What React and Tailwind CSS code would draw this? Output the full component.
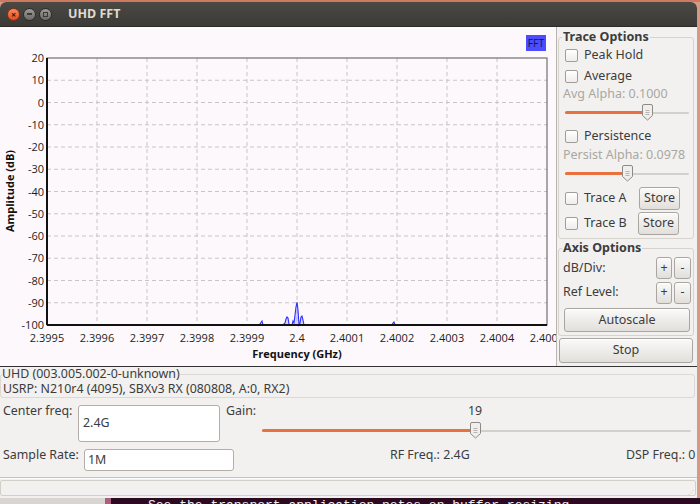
import React from "react";

const yTicks = [20, 10, 0, -10, -20, -30, -40, -50, -60, -70, -80, -90, -100];
const xTicks = ["2.3995", "2.3996", "2.3997", "2.3998", "2.3999", "2.4", "2.4001", "2.4002", "2.4003", "2.4004", "2.4005"];

// plot frame in svg coords (svg starts at page y 27)
const L = 47, R = 547, T = 31, B = 298;
const yOf = (v) => T + ((20 - v) * (B - T)) / 120;
const xOf = (i) => L + i * 50;

const trace =
  "M47 298 L258 298 L260 297 L262 294 L263 298 L283 298 L285 296 L286 292 L287 290 L288 291 L289 297 L290 298 L292 298 L293 294 L294 296 L295 288 L296 280 L297 275 L298 283 L299 298 L300 296 L301 290 L302 289 L303 293 L304 298 L392 298 L393 296 L394 295 L395 298 L547 298";

function Plot() {
  return (
    <svg width="556" height="339" className="block font-['Open_Sans',sans-serif]">
      {xTicks.slice(1, -1).map((_, i) => (
        <line key={"v" + i} x1={xOf(i + 1)} x2={xOf(i + 1)} y1={T} y2={B} stroke="#c6c6c6" strokeDasharray="4 3" />
      ))}
      {yTicks.slice(1, -1).map((v) => (
        <line key={"h" + v} x1={L} x2={R} y1={yOf(v)} y2={yOf(v)} stroke="#c6c6c6" strokeDasharray="4 3" />
      ))}
      <path d={trace + " Z"} fill="#8c8cff" fillOpacity="0.35" stroke="none" />
      <path d={trace} fill="none" stroke="#2e2eff" strokeWidth="1.1" />
      <rect x={L} y={T} width={R - L} height={B - T} fill="none" stroke="#555" strokeWidth="1" />
      <line x1={L} x2={L} y1={T} y2={B} stroke="#111" strokeWidth="2" />
      <line x1={L} x2={R} y1={B} y2={B} stroke="#111" strokeWidth="2" />
      {yTicks.map((v) => (
        <text key={"yl" + v} x="44" y={yOf(v) + 4} textAnchor="end" fontSize="11" fill="#1e1e1e">
          {v}
        </text>
      ))}
      {xTicks.map((t, i) => (
        <text key={"xl" + t} x={xOf(i)} y="315" textAnchor="middle" fontSize="11" fill="#1e1e1e">
          {t}
        </text>
      ))}
      <text x="297" y="331" textAnchor="middle" fontSize="11" fontWeight="bold" fill="#111">
        Frequency (GHz)
      </text>
      <text x="14" y="164" textAnchor="middle" fontSize="11" fontWeight="bold" fill="#111" transform="rotate(-90 14 164)">
        Amplitude (dB)
      </text>
      <rect x="526" y="8" width="20" height="16" fill="#4c4cff" />
      <text x="536" y="20" textAnchor="middle" fontSize="10.5" fill="#16163a">
        FFT
      </text>
    </svg>
  );
}

function Checkbox() {
  return <span className="w-[13px] h-[13px] shrink-0 rounded-[2px] border border-[#a19e99] bg-gradient-to-b from-white to-[#efedeb]" />;
}

function Handle() {
  return (
    <svg width="11" height="17" viewBox="0 0 11 17">
      <path d="M2 0.5 H9 a1.5 1.5 0 0 1 1.5 1.5 V11.5 L5.5 16 L0.5 11.5 V2 a1.5 1.5 0 0 1 1.5 -1.5 Z" fill="#f1efed" stroke="#8e8b86" />
      <path d="M3.5 6.5 H7.5 M3.5 8.5 H7.5 M3.5 10.5 H7.5" stroke="#b8b5b0" />
    </svg>
  );
}

function Slider({ width, at }) {
  return (
    <div className="relative h-[18px]" style={{ width }}>
      <div className="absolute left-0 right-0 top-[8px] h-[2px] rounded-full bg-[#d3d0cb]" />
      <div className="absolute left-0 top-[7px] h-[3px] rounded-full bg-[#e9703f]" style={{ width: at }} />
      <div className="absolute top-0" style={{ left: at - 5 }}>
        <Handle />
      </div>
    </div>
  );
}

function Button({ children, className = "" }) {
  return (
    <div
      className={
        "flex items-center justify-center rounded-[3px] border border-[#a9a6a1] bg-gradient-to-b from-[#fbfaf9] to-[#e2dfdb] text-[#3c3c3c] shadow-[inset_0_1px_0_#fff] " +
        className
      }
    >
      {children}
    </div>
  );
}

function Group({ title, className = "", children }) {
  return (
    <fieldset className={"rounded-[3px] border border-[#d6d2cc] " + className}>
      <legend className="ml-[3px] px-[1px] text-[12.5px] leading-[16px] font-bold text-[#3c3c3c]">{title}</legend>
      {children}
    </fieldset>
  );
}

function CheckRow({ label, className }) {
  return (
    <div className={"flex items-center gap-[6px] pl-[6px] " + className}>
      <Checkbox />
      <span>{label}</span>
    </div>
  );
}

function TracePanel() {
  return (
    <div className="flex-1 flex flex-col text-[12.5px] text-[#3c3c3c]">
      <Group title="Trace Options" className="ml-[1px] mr-[3px] mt-[2px] pb-[2px]">
        <CheckRow label="Peak Hold" className="h-[20px]" />
        <CheckRow label="Average" className="h-[22px]" />
        <div className="h-[15px] flex items-center pl-[4px] text-[#aaa7a1]">Avg Alpha: 0.1000</div>
        <div className="h-[22px] flex items-center pl-[6px]">
          <Slider width={124} at={82} />
        </div>
        <CheckRow label="Persistence" className="h-[25px]" />
        <div className="h-[13px] flex items-center pl-[4px] text-[#aaa7a1]">Persist Alpha: 0.0978</div>
        <div className="h-[23px] flex items-center pl-[6px]">
          <Slider width={124} at={62} />
        </div>
        <div className="h-[26px] flex items-center">
          <CheckRow label="Trace A" className="w-[80px]" />
          <Button className="w-[41px] h-[23px]">Store</Button>
        </div>
        <div className="h-[25px] flex items-center">
          <CheckRow label="Trace B" className="w-[79px]" />
          <Button className="w-[41px] h-[23px]">Store</Button>
        </div>
      </Group>
      <Group title="Axis Options" className="ml-[1px] mr-[3px] mt-[1px] pb-[3px]">
        <div className="h-[24px] flex items-center pl-[4px]">
          <span className="w-[93px]">dB/Div:</span>
          <Button className="w-[16px] h-[22px]">+</Button>
          <Button className="w-[17px] h-[22px] ml-[2px]">-</Button>
        </div>
        <div className="h-[25px] flex items-center pl-[4px]">
          <span className="w-[93px]">Ref Level:</span>
          <Button className="w-[16px] h-[22px]">+</Button>
          <Button className="w-[17px] h-[22px] ml-[2px]">-</Button>
        </div>
        <Button className="mt-[3px] ml-[5px] w-[126px] h-[24px]">Autoscale</Button>
      </Group>
      <Button className="ml-[2px] mr-[4px] mt-[2px] h-[25px]">Stop</Button>
    </div>
  );
}

function TitleBar() {
  return (
    <div className="h-[25px] shrink-0 flex items-center bg-gradient-to-b from-[#4a4944] to-[#3b3a36] border-b border-[#2c2b28]">
      <div className="flex items-center gap-[3px] ml-[7px]">
        <span className="w-[13px] h-[13px] rounded-full bg-gradient-to-b from-[#f88a5e] to-[#e04c1f] border border-[#8f2e10] flex items-center justify-center text-[#3a1608] text-[9px] leading-none font-bold">
          ×
        </span>
        <span className="w-[13px] h-[13px] rounded-full bg-gradient-to-b from-[#9c9a95] to-[#6c6a66] border border-[#2e2d2a] flex items-center justify-center">
          <span className="w-[5px] h-[1.5px] bg-[#3b3a36]" />
        </span>
        <span className="w-[13px] h-[13px] rounded-full bg-gradient-to-b from-[#9c9a95] to-[#6c6a66] border border-[#2e2d2a] flex items-center justify-center">
          <span className="w-[5px] h-[5px] border border-[#3b3a36]" />
        </span>
      </div>
      <span className="ml-[16px] text-[12.5px] font-bold text-[#dfdbd2]">UHD FFT</span>
    </div>
  );
}

function BottomControls() {
  return (
    <div className="flex flex-col text-[12.4px] text-[#3c3c3c]">
      <fieldset className="mr-[2px] border border-[#dcd8d2] rounded-[3px] pb-[1px]">
        <legend className="ml-[1px] leading-[14px]">UHD (003.005.002-0-unknown)</legend>
        <div className="h-[15px] leading-[15px] pl-[2px]">USRP: N210r4 (4095), SBXv3 RX (080808, A:0, RX2)</div>
      </fieldset>
      <div className="mt-[6px] h-[40px] flex items-start">
        <span className="ml-[3px] w-[75px] leading-[14px]">Center freq:</span>
        <div className="mt-[1px] w-[142px] h-[37px] rounded-[3px] border border-[#b3aea7] bg-white flex items-center pl-[4px]">2.4G</div>
        <span className="ml-[6px] w-[36px] leading-[14px]">Gain:</span>
        <div className="w-[429px] flex flex-col items-center">
          <span className="leading-[14px] mr-[3px]">19</span>
          <div className="mt-[4px]">
            <Slider width={429} at={213} />
          </div>
        </div>
      </div>
      <div className="mt-[3px] h-[26px] flex items-start">
        <span className="ml-[3px] mt-[1px] w-[81px] leading-[14px]">Sample Rate:</span>
        <div className="mt-[2px] w-[150px] h-[22px] rounded-[3px] border border-[#b3aea7] bg-white flex items-center pl-[3px]">1M</div>
        <span className="ml-[156px] mt-[1px] w-[236px] leading-[14px] whitespace-nowrap">RF Freq.: 2.4G</span>
        <span className="mt-[1px] leading-[14px] whitespace-nowrap">DSP Freq.: 0</span>
      </div>
      <div className="mt-[4px] h-[2px] border-t border-[#c6c2bc] bg-white/70" />
      <div className="mt-[1px] h-[16px] mr-[1px] border border-[#d3cfc9] rounded-[2px] flex justify-end items-end">
        <span className="text-[6px] leading-[6px] text-[#bcb8b2] pr-[1px]">⋰</span>
      </div>
    </div>
  );
}

export default function App() {
  return (
    <div className="w-[700px] h-[504px] overflow-hidden flex flex-col bg-[#d59a86] font-['Noto_Sans',sans-serif]">
      <div className="h-[2px] shrink-0 bg-[#cf7a60]" />
      <div className="w-[697px] h-[496px] shrink-0 rounded-t-[6px] overflow-hidden flex flex-col bg-[#f2f1f0]">
        <TitleBar />
        <div className="h-[340px] shrink-0 flex border-b border-[#333]">
          <div className="w-[557px] shrink-0 bg-[#fdf8fc] border-r border-[#b8b5b0]">
            <Plot />
          </div>
          <TracePanel />
        </div>
        <BottomControls />
      </div>
      <div className="flex-1 flex">
        <div className="w-[105px] bg-[#d9d6d2]" />
        <div className="w-[6px] bg-[#a9607e]" />
        <div className="flex-1 bg-[#2c0a22] overflow-hidden">
          <div className="ml-[37px] mt-[1px] font-['Liberation_Mono',monospace] text-[13px] leading-[13px] text-[#eeeeec] whitespace-nowrap">
            See the transport application notes on buffer resizing
          </div>
        </div>
      </div>
    </div>
  );
}
